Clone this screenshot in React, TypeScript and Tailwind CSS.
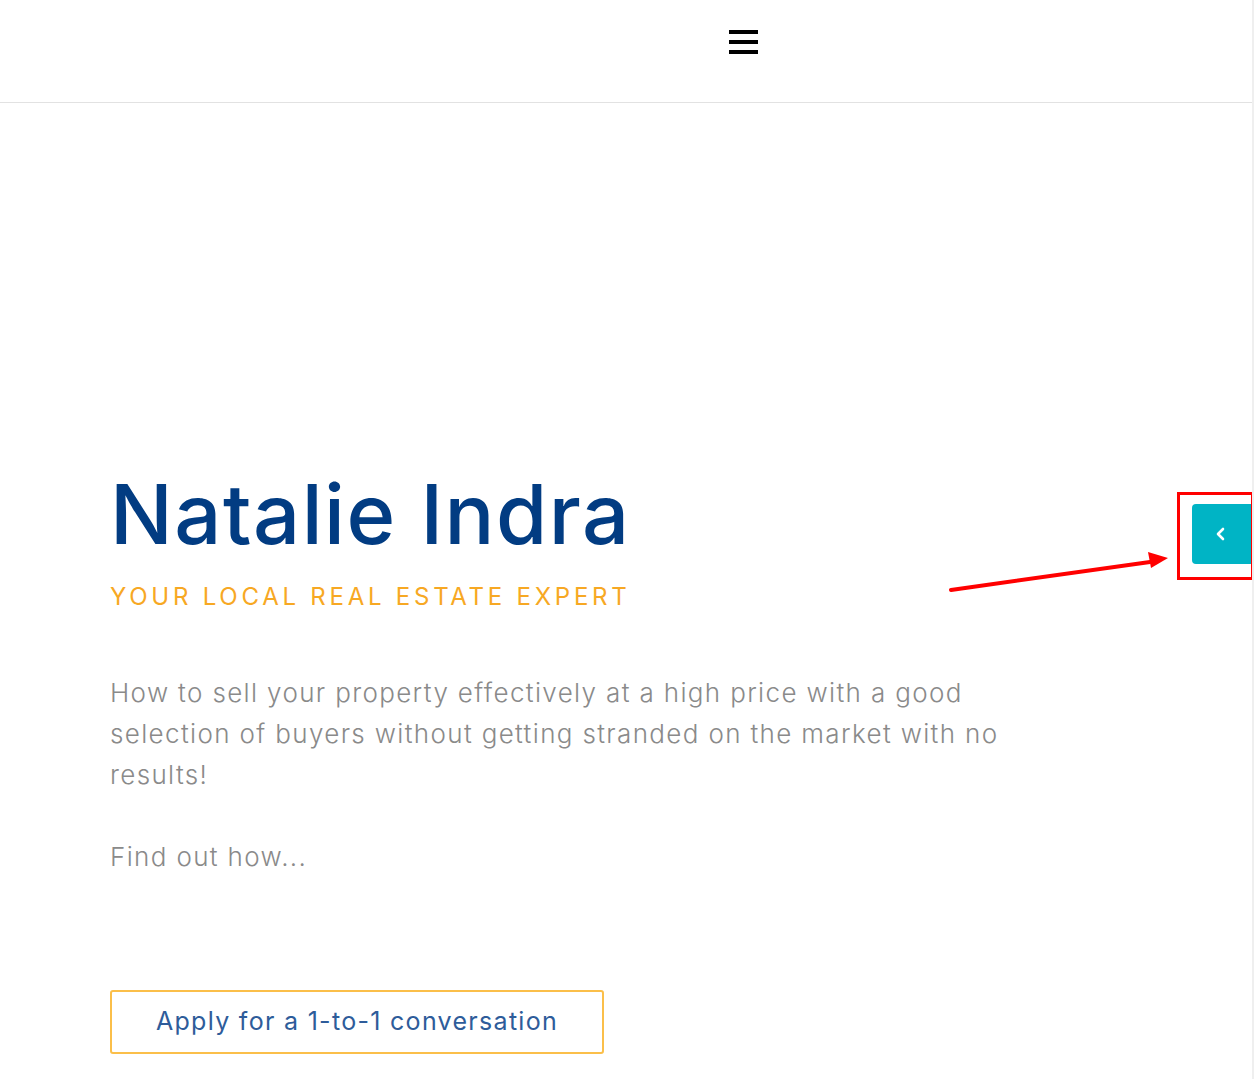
export default function App() {
  return (
    <div className="relative w-[1254px] h-[1079px] overflow-hidden bg-white border-r-2 border-[#efefef]">
      <header className="h-[103px] border-b border-[#e2e2e2] flex items-start pt-[30px] pl-[729px]">
        <button className="flex flex-col gap-[6px] w-[29px]" aria-label="Menu">
          <span className="block h-[4px] w-[29px] bg-black" />
          <span className="block h-[4px] w-[29px] bg-black" />
          <span className="block h-[4px] w-[29px] bg-black" />
        </button>
      </header>

      <main className="pl-[110px] pt-[370px]">
        <h1 className="font-['Inter',sans-serif] font-medium text-[83px] leading-none tracking-[1.5px] text-[#023c82]">
          Natalie Indra
        </h1>
        <p className="mt-[29px] font-['Inter',sans-serif] text-[24px] leading-none tracking-[3.75px] text-[#f7a823]">
          YOUR LOCAL REAL ESTATE EXPERT
        </p>
        <div className="mt-[63px] max-w-[940px] font-['Inter',sans-serif] font-light text-[26px] leading-[41px] tracking-[1.35px] text-[#8a8a8a]">
          <p>
            How to sell your property effectively at a high price with a good selection of buyers without getting
            stranded on the market with no results!
          </p>
          <p className="mt-[41px]">Find out how...</p>
        </div>
        <a
          href="#"
          className="mt-[113px] flex items-center justify-center w-[494px] h-[64px] rounded-[3px] border-2 border-[#fbbf4a] font-['Inter',sans-serif] text-[25px] tracking-[1.3px] text-[#2e5c9a]"
        >
          Apply for a 1-to-1 conversation
        </a>
      </main>

      <button
        aria-label="Open panel"
        className="absolute left-[1192px] top-[504px] w-[64px] h-[60px] rounded-l-[4px] bg-[#00b4c5] flex items-center justify-start pl-[23px]"
      >
        <svg width="12" height="14" viewBox="0 0 12 14" fill="none">
          <path d="M8 2 L3 7 L8 12" stroke="white" strokeWidth="2.6" strokeLinecap="round" strokeLinejoin="round" />
        </svg>
      </button>

      <div className="absolute left-[1177px] top-[492px] w-[77px] h-[88px] border-[3px] border-[#ff0000]" />
      <svg className="absolute left-0 top-0 pointer-events-none" width="1254" height="1079">
        <line x1="951" y1="590" x2="1150" y2="562" stroke="#ff0000" strokeWidth="4" strokeLinecap="round" />
        <polygon points="1168,558 1148,552 1151,568" fill="#ff0000" />
      </svg>
    </div>
  );
}
